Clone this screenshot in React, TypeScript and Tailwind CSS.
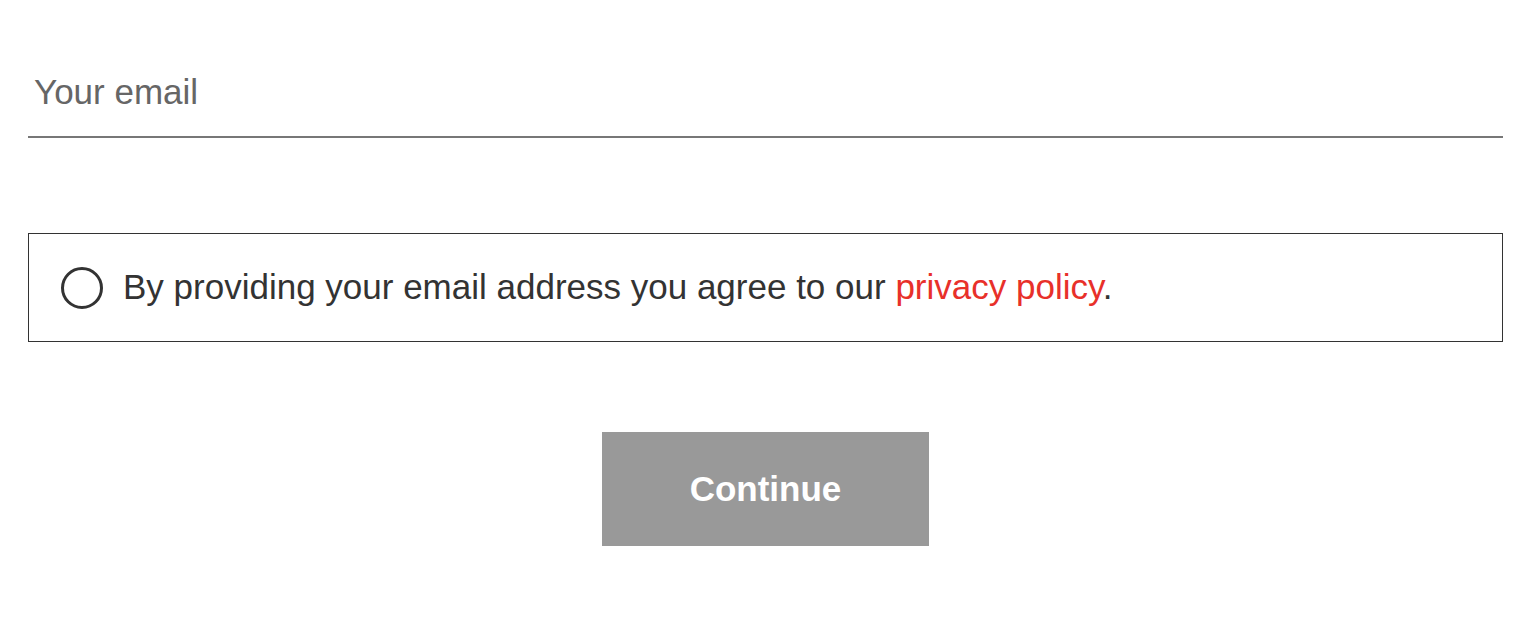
import { useState } from "react"

export default function App() {
  const [email, setEmail] = useState("")
  const [agreed, setAgreed] = useState(false)

  return (
    <div className="min-h-screen bg-white font-['Liberation_Sans',Arial,sans-serif]">
      <div className="pl-[28px] pr-[33px] pt-[52px]">
        <input
          type="email"
          value={email}
          onChange={(e) => setEmail(e.target.value)}
          placeholder="Your email"
          className="block h-[86px] w-full border-b-2 border-[#777] bg-transparent px-[6px] pb-[4px] text-[35px] text-[#333] outline-none placeholder:text-[#666]"
        />

        <label className="mt-[95px] flex h-[109px] cursor-pointer items-center border-[1.5px] border-[#333] pl-[32px]">
          <input
            type="checkbox"
            checked={agreed}
            onChange={() => setAgreed(!agreed)}
            className="sr-only"
          />
          <span className="flex h-[42px] w-[42px] shrink-0 items-center justify-center rounded-full border-[3.5px] border-[#333]">
            {agreed && <span className="h-[22px] w-[22px] rounded-full bg-[#333]" />}
          </span>
          <span className="ml-[20px] text-[35px] text-[#333]">
            By providing your email address you agree to our{" "}
            <a href="#" className="text-[#e8302a]">
              privacy policy
            </a>
            .
          </span>
        </label>

        <div className="mt-[90px] flex justify-center">
          <button
            type="button"
            className="flex h-[114px] w-[327px] items-center justify-center bg-[#999] text-[35px] font-bold text-white"
          >
            Continue
          </button>
        </div>
      </div>
    </div>
  )
}
